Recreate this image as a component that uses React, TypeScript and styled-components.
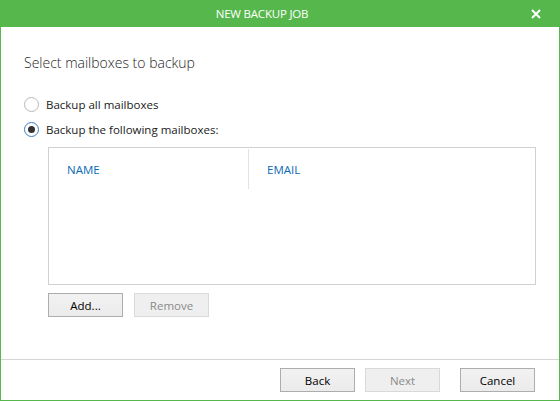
import React, { useState } from 'react';
import styled, { createGlobalStyle } from 'styled-components';

const GlobalStyle = createGlobalStyle`
  html, body {
    margin: 0;
    padding: 0;
    background: #ffffff;
  }
  body {
    font-family: "Open Sans", "Noto Sans", sans-serif;
  }
`;

const green = '#56b84c';

const Window = styled.div`
  width: 560px;
  height: 401px;
  box-sizing: border-box;
  display: flex;
  flex-direction: column;
  border: 1px solid ${green};
  border-top: none;
  background: #ffffff;
`;

const TitleBar = styled.div`
  height: 27px;
  margin: 0 -1px;
  background: ${green};
  display: flex;
  align-items: center;
  color: #ffffff;
`;

const Title = styled.div`
  flex: 1;
  text-align: center;
  font-size: 11.5px;
  letter-spacing: -0.2px;
  padding-left: 8px;
`;

const CloseButton = styled.button`
  width: 44px;
  height: 27px;
  border: none;
  background: transparent;
  display: flex;
  align-items: center;
  justify-content: center;
  padding: 0 4px 0 0;
  cursor: pointer;
`;

const Body = styled.div`
  flex: 1;
  display: flex;
  flex-direction: column;
  padding: 25px 23px 0 23px;
`;

const Heading = styled.h1`
  margin: 0 0 18px 0;
  font-size: 14px;
  font-weight: 300;
  color: #1e1e1e;
  line-height: 22px;
`;

const RadioRow = styled.label`
  display: flex;
  align-items: center;
  gap: 7px;
  height: 25px;
  font-size: 11.5px;
  color: #1a1a1a;
  cursor: pointer;
`;

const RadioCircle = styled.span<{ $checked: boolean }>`
  width: 15px;
  height: 15px;
  box-sizing: border-box;
  border-radius: 50%;
  border: 1px solid ${({ $checked }) => ($checked ? '#3b7fc4' : '#b8b8b8')};
  background: #ffffff;
  display: flex;
  align-items: center;
  justify-content: center;
  &::after {
    content: '';
    width: 7px;
    height: 7px;
    border-radius: 50%;
    background: ${({ $checked }) => ($checked ? '#333333' : 'transparent')};
  }
`;

const Indented = styled.div`
  padding-left: 24px;
  display: flex;
  flex-direction: column;
`;

const Table = styled.div`
  margin-top: 5px;
  height: 138px;
  box-sizing: border-box;
  border: 1px solid #d0d0d0;
  display: flex;
  flex-direction: column;
`;

const HeaderRow = styled.div`
  display: grid;
  grid-template-columns: 200px 1fr;
  height: 40px;
  padding-top: 1px;
`;

const HeaderCell = styled.div<{ $divider?: boolean }>`
  display: flex;
  align-items: center;
  padding-left: 18px;
  font-size: 11.5px;
  color: #0a6ab5;
  border-right: ${({ $divider }) => ($divider ? '1px solid #e3e3e3' : 'none')};
`;

const ButtonRow = styled.div`
  display: flex;
  gap: 11px;
  margin-top: 8px;
`;

const Button = styled.button<{ $push?: boolean }>`
  width: 75px;
  height: 24px;
  box-sizing: border-box;
  margin-left: ${({ $push }) => ($push ? '10px' : '0')};
  border: 1px solid #adadad;
  background: linear-gradient(#f2f2f2, #ebebeb);
  color: #000000;
  font-family: "Open Sans", "Noto Sans", sans-serif;
  font-size: 11.5px;
  padding: 0;
  cursor: pointer;
  &:disabled {
    border-color: #d9d9d9;
    background: #efefef;
    color: #8a8a8a;
    cursor: default;
  }
`;

const Footer = styled.div`
  height: 41px;
  box-sizing: border-box;
  border-top: 1px solid #d4d4d4;
  display: flex;
  align-items: center;
  justify-content: flex-end;
  padding: 0 24px 0 0;
  gap: 10px;
`;

export default function App() {
  const [mode, setMode] = useState<'all' | 'list'>('list');

  return (
    <>
      <GlobalStyle />
      <Window>
        <TitleBar>
          <Title>NEW BACKUP JOB</Title>
          <CloseButton aria-label="Close">
            <svg width="10" height="10" viewBox="0 0 10 10">
              <path d="M1 1 L9 9 M9 1 L1 9" stroke="#ffffff" strokeWidth="2" />
            </svg>
          </CloseButton>
        </TitleBar>
        <Body>
          <Heading>Select mailboxes to backup</Heading>
          <RadioRow onClick={() => setMode('all')}>
            <RadioCircle $checked={mode === 'all'} />
            Backup all mailboxes
          </RadioRow>
          <RadioRow onClick={() => setMode('list')}>
            <RadioCircle $checked={mode === 'list'} />
            Backup the following mailboxes:
          </RadioRow>
          <Indented>
            <Table>
              <HeaderRow>
                <HeaderCell $divider>NAME</HeaderCell>
                <HeaderCell>EMAIL</HeaderCell>
              </HeaderRow>
            </Table>
            <ButtonRow>
              <Button>Add...</Button>
              <Button disabled>Remove</Button>
            </ButtonRow>
          </Indented>
        </Body>
        <Footer>
          <Button>Back</Button>
          <Button disabled>Next</Button>
          <Button $push>Cancel</Button>
        </Footer>
      </Window>
    </>
  );
}
